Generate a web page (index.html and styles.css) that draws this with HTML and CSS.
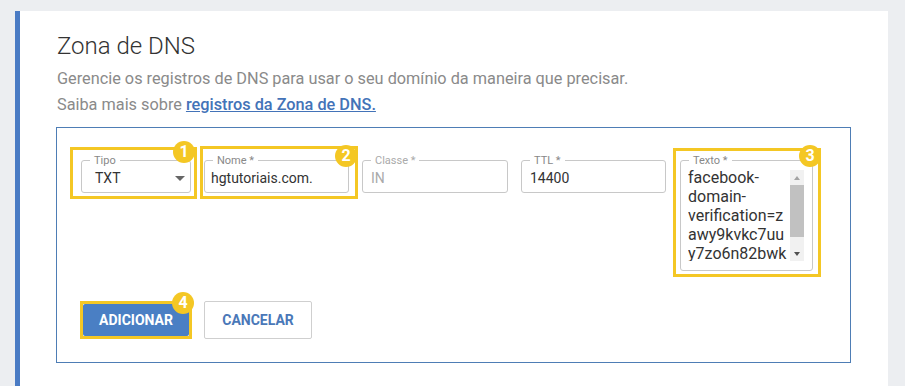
FILE: index.html
```html
<!DOCTYPE html>
<html>
<head>
    <title>Zona de DNS</title>
    <link rel="stylesheet" href="styles.css">
</head>
<body>
    <div class="page">
        <section class="dns-card">
            <h1 class="dns-title">Zona de DNS</h1>
            <p class="dns-desc">Gerencie os registros de DNS para usar o seu domínio da maneira que precisar.<br>Saiba mais sobre <a href="#">registros da Zona de DNS.</a></p>

            <form class="record-form" onsubmit="return false;">
                <div class="field-row">
                    <div class="mark mark-tipo">
                        <fieldset class="field">
                            <legend>Tipo</legend>
                            <div class="select-box"><span>TXT</span><span class="caret"></span></div>
                        </fieldset>
                        <span class="badge badge-1">1</span>
                    </div>

                    <div class="mark mark-nome">
                        <fieldset class="field">
                            <legend>Nome *</legend>
                            <input type="text" value="hgtutoriais.com.">
                        </fieldset>
                        <span class="badge badge-2">2</span>
                    </div>

                    <fieldset class="field field-classe disabled">
                        <legend>Classe *</legend>
                        <input type="text" value="IN" disabled>
                    </fieldset>

                    <fieldset class="field field-ttl">
                        <legend>TTL *</legend>
                        <input type="text" value="14400">
                    </fieldset>

                    <div class="mark mark-texto">
                        <fieldset class="field field-texto">
                            <legend>Texto *</legend>
                            <div class="texto-box">
                                <textarea>facebook-domain-verification=zawy9kvkc7uuy7zo6n82bwkq3xh1l</textarea>
                                <div class="scrollbar">
                                    <span class="sb-btn"><span class="sb-up"></span></span>
                                    <span class="sb-track"><span class="sb-thumb"></span></span>
                                    <span class="sb-btn"><span class="sb-down"></span></span>
                                </div>
                            </div>
                        </fieldset>
                        <span class="badge badge-3">3</span>
                    </div>
                </div>

                <div class="button-row">
                    <div class="mark mark-add">
                        <button class="btn btn-primary">ADICIONAR</button>
                        <span class="badge badge-4">4</span>
                    </div>
                    <button class="btn btn-outline">CANCELAR</button>
                </div>
            </form>
        </section>
    </div>
</body>
</html>
```

FILE: styles.css
```css
body {
    margin: 0;
    background-color: #eceef1;
    font-family: Roboto, "Liberation Sans", sans-serif;
}

.page {
    padding: 11px 17px 0 15px;
}

.dns-card {
    box-sizing: border-box;
    min-height: calc(100vh - 11px);
    padding: 20px 37px 20px;
    border-left: 5px solid #4a7bc4;
    background-color: #fff;
}

.dns-title {
    margin: 0;
    font-size: 24px;
    font-weight: 300;
    line-height: 30px;
    color: #333;
}

.dns-desc {
    margin: 5px 0 0;
    font-size: 16.3px;
    line-height: 26px;
    color: #8a8a8a;
}

.dns-desc a {
    color: #4373b8;
    font-weight: 500;
}

.record-form {
    margin: 9px 0 0 -1px;
    padding: 19px 0 23px 13px;
    border: 1px solid #4e7db5;
}

.field-row {
    display: flex;
    align-items: flex-start;
}

/* yellow highlight around the numbered steps */
.mark {
    position: relative;
    box-sizing: border-box;
    border: 3px solid #f4c724;
}

.mark-tipo {
    width: 127px;
    padding: 4px 3px 3px 8px;
}

.mark-nome {
    width: 158px;
    margin: -1px 0 0 3px;
    padding: 5px 6px 3px 1px;
}

.mark-texto {
    width: 148px;
    margin: 1px 0 0 7px;
    padding: 3px 5px 3px 4px;
}

.badge {
    position: absolute;
    width: 22px;
    height: 22px;
    border-radius: 50%;
    background-color: #f4c724;
    color: #fff;
    font-size: 16px;
    font-weight: 700;
    line-height: 22px;
    text-align: center;
}

.badge-1 { top: -9px; right: -1px; }
.badge-2 { top: -4px; right: -2px; }
.badge-3 { top: -6px; right: -3px; }
.badge-4 { top: -12px; right: -5px; }

.field {
    min-width: 0;
    margin: 0;
    padding: 0 8px;
    border: 1px solid #c8c8c8;
    border-radius: 3px;
}

.field legend {
    padding: 0 4px;
    font-size: 11px;
    line-height: 13px;
    color: #888;
}

.field input {
    display: block;
    box-sizing: border-box;
    width: 100%;
    height: 25px;
    padding: 0 0 3px;
    border: 0;
    outline: none;
    background: transparent;
    font-family: inherit;
    font-size: 14px;
    color: #333;
}

.mark-nome input {
    margin-left: -2px;
}

.field-classe {
    width: 146px;
    box-sizing: border-box;
    margin: 7px 0 0 4px;
}

.field-ttl {
    width: 145px;
    box-sizing: border-box;
    margin: 7px 0 0 13px;
}

.disabled legend,
.disabled input {
    color: #aaa;
}

.select-box {
    display: flex;
    align-items: center;
    justify-content: space-between;
    box-sizing: border-box;
    height: 25px;
    padding: 0 0 3px 5px;
    font-size: 14px;
    color: #333;
}

.caret {
    width: 0;
    height: 0;
    margin-right: -3px;
    border-left: 5px solid transparent;
    border-right: 5px solid transparent;
    border-top: 5px solid #666;
}

.texto-box {
    display: flex;
    align-items: flex-start;
    margin: 1px 0 9px -1px;
}

.texto-box textarea {
    display: block;
    width: 102px;
    height: 93px;
    margin: 0;
    padding: 0;
    border: 0;
    outline: none;
    resize: none;
    overflow: hidden;
    font-family: inherit;
    font-size: 16px;
    line-height: 19px;
    color: #333;
}

/* scrollbar of the text field */
.scrollbar {
    display: flex;
    flex-direction: column;
    width: 14px;
    height: 91px;
    margin-top: 2px;
    background-color: #f1f1f1;
}

.sb-btn {
    display: flex;
    align-items: center;
    justify-content: center;
    height: 15px;
}

.sb-track {
    flex: 1;
}

.sb-thumb {
    display: block;
    height: 52px;
    background-color: #c1c1c1;
}

.sb-up,
.sb-down {
    width: 0;
    height: 0;
    border-left: 3.5px solid transparent;
    border-right: 3.5px solid transparent;
}

.sb-up {
    border-bottom: 4px solid #a3a3a3;
}

.sb-down {
    border-top: 4px solid #505050;
}

.button-row {
    display: flex;
    align-items: flex-start;
    margin-top: 24px;
    padding-left: 10px;
}

.mark-add {
    padding: 0;
}

.btn {
    height: 32px;
    border-radius: 2px;
    font-family: inherit;
    font-size: 14px;
    font-weight: 700;
    cursor: pointer;
}

.btn-primary {
    display: block;
    width: 106px;
    border: none;
    background-color: #4a7fc4;
    color: #fff;
}

.btn-outline {
    width: 108px;
    height: 38px;
    margin-left: 12px;
    border: 1px solid #cfcfcf;
    background-color: #fff;
    color: #4a78b8;
}
```
